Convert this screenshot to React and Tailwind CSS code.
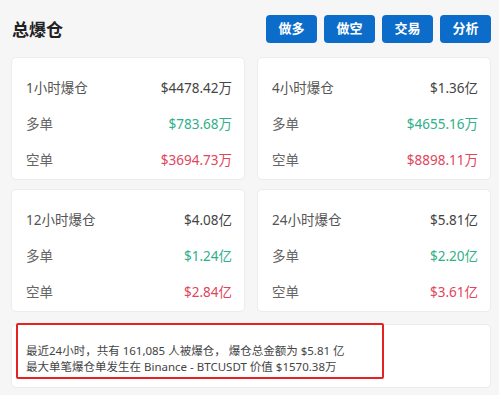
export default function App() {
  const font = { fontFamily: '"Noto Sans", "Noto Sans CJK SC", sans-serif' };
  const cards = [
    { t: "1小时爆仓", v: "$4478.42万", l: "$783.68万", s: "$3694.73万" },
    { t: "4小时爆仓", v: "$1.36亿", l: "$4655.16万", s: "$8898.11万" },
    { t: "12小时爆仓", v: "$4.08亿", l: "$1.24亿", s: "$2.84亿" },
    { t: "24小时爆仓", v: "$5.81亿", l: "$2.20亿", s: "$3.61亿" },
  ];
  return (
    <div className="w-[499px] h-[395px] bg-[#f6f6f6] overflow-hidden" style={font}>
      <div className="flex items-center justify-between pl-[12px] pr-[8px] pt-[15px] h-[43px]">
        <div className="text-[17px] font-bold text-[#222] leading-none">总爆仓</div>
        <div className="flex gap-[7px]">
          {["做多", "做空", "交易", "分析"].map((b) => (
            <div key={b} className="w-[51px] h-[28px] rounded-[4px] bg-[#0b6cc9] text-white text-[13px] font-bold flex items-center justify-center">
              {b}
            </div>
          ))}
        </div>
      </div>
      <div className="grid grid-cols-2 gap-x-[12px] gap-y-[9px] px-[11px] mt-[14px] w-[491px] pr-0">
        {cards.map((c) => (
          <div key={c.t} className="bg-white rounded-[5px] border border-[#ececec] pt-[17px] pb-[6px] pl-[14px] pr-[12px] flex flex-col gap-[10px]">
            <div className="h-[26px] flex items-center justify-between text-[13.5px]">
              <span className="text-[#555]">{c.t}</span>
              <span className="text-[#444]">{c.v}</span>
            </div>
            <div className="h-[26px] flex items-center justify-between text-[13.5px]">
              <span className="text-[#666]">多单</span>
              <span className="text-[#2fb08a]">{c.l}</span>
            </div>
            <div className="h-[26px] flex items-center justify-between text-[13.5px]">
              <span className="text-[#666]">空单</span>
              <span className="text-[#e0465c]">{c.s}</span>
            </div>
          </div>
        ))}
      </div>
      <div className="relative ml-[11px] mt-[12px] w-[480px] h-[64px] bg-white rounded-[5px] border border-[#ececec] pl-[14px] pt-[18px] text-[11.5px] leading-[16px] text-[#444]">
        <div>最近24小时，共有 161,085 人被爆仓， 爆仓总金额为 $5.81 亿</div>
        <div>最大单笔爆仓单发生在 Binance - BTCUSDT 价值 $1570.38万</div>
        <div className="absolute left-[4px] top-[-2px] w-[368px] h-[56px] border-2 border-[#e52222] rounded-[2px]"></div>
      </div>
    </div>
  );
}
